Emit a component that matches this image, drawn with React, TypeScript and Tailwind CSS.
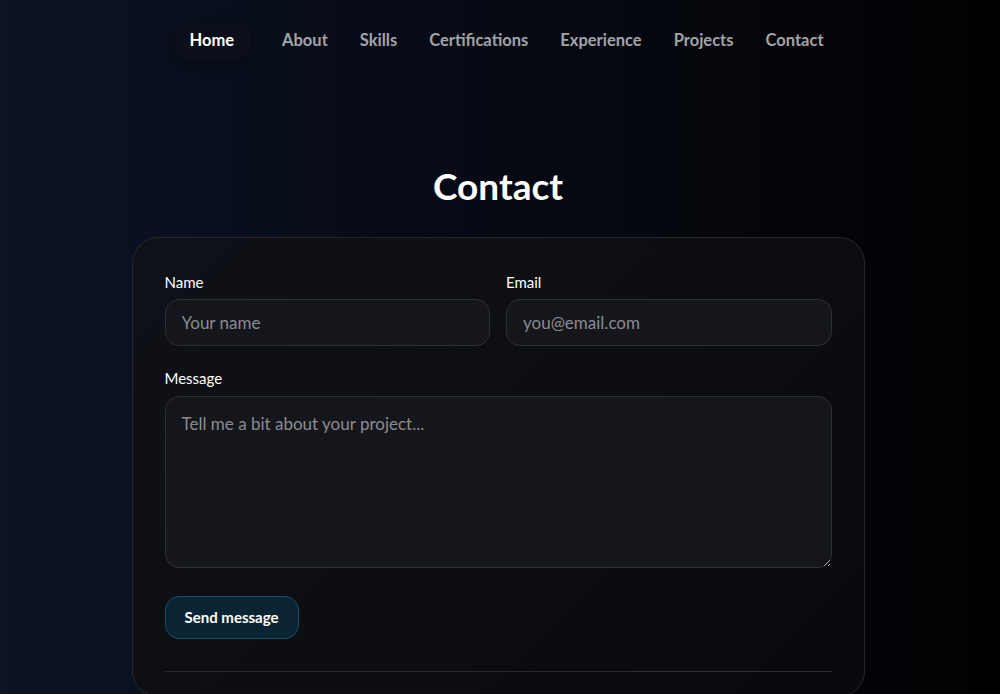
const links = ["Home", "About", "Skills", "Certifications", "Experience", "Projects", "Contact"];

export default function App() {
  return (
    <div
      className="min-h-[694px] w-full bg-[linear-gradient(90deg,#0b1324_0%,#070b16_40%,#05070d_70%,#010102_100%)] text-white"
      style={{ fontFamily: 'Lato, "Noto Sans", sans-serif' }}
    >
      <nav className="flex justify-center pt-[21px]">
        <ul className="flex items-center pl-[12px]">
          {links.map((l, i) => (
            <li key={l} className={i === 0 ? "mr-[15px]" : ""}>
              <a
                href="#"
                className={
                  i === 0
                    ? "block rounded-2xl bg-[#0a0f1a] px-[17px] py-[7px] text-[16.5px] font-bold text-white shadow-[0_5px_12px_rgba(0,0,0,0.3)]"
                    : "block px-[16px] py-[7px] text-[16.5px] font-bold text-[#a3a3a8]"
                }
              >
                {l}
              </a>
            </li>
          ))}
        </ul>
      </nav>

      <div className="pr-[4px]">
        <section className="mx-auto mt-[103px] flex max-w-[733px] flex-col items-center">
          <h2 className="text-[37px] font-bold leading-[46px]">Contact</h2>

          <div className="mt-[28px] w-full rounded-[26px] border border-[#25272d] bg-[linear-gradient(135deg,#0f1118,#0d0e12_50%,#08090c)] px-[32px] pt-[33px] pb-[24px]">
            <form className="flex flex-col">
              <div className="grid grid-cols-2 gap-[16px]">
                <label className="flex flex-col gap-[6px]">
                  <span className="text-[15px] text-white">Name</span>
                  <input
                    placeholder="Your name"
                    className="h-[47px] rounded-[14px] border border-[#2d2f36] bg-[#15161b] px-[16px] text-[17px] text-white placeholder:text-[#8b8c92] outline-none"
                  />
                </label>
                <label className="flex flex-col gap-[6px]">
                  <span className="text-[15px] text-white">Email</span>
                  <input
                    placeholder="you@email.com"
                    className="h-[47px] rounded-[14px] border border-[#2d2f36] bg-[#15161b] px-[16px] text-[17px] text-white placeholder:text-[#8b8c92] outline-none"
                  />
                </label>
              </div>

              <label className="mt-[21px] flex flex-col gap-[6px]">
                <span className="text-[15px] text-white">Message</span>
                <textarea
                  placeholder="Tell me a bit about your project..."
                  className="h-[172px] rounded-[14px] border border-[#2d2f36] bg-[#15161b] px-[16px] py-[14px] text-[17px] text-white placeholder:text-[#8b8c92] outline-none"
                />
              </label>

              <div className="mt-[28px]">
                <button
                  type="button"
                  className="h-[43px] rounded-[14px] border border-[#11506a] bg-[#0a2434] px-[19px] text-[15px] font-bold text-white"
                >
                  Send message
                </button>
              </div>

              <hr className="mt-[32px] border-[#2a2c31]" />
            </form>
          </div>
        </section>
      </div>
    </div>
  );
}
